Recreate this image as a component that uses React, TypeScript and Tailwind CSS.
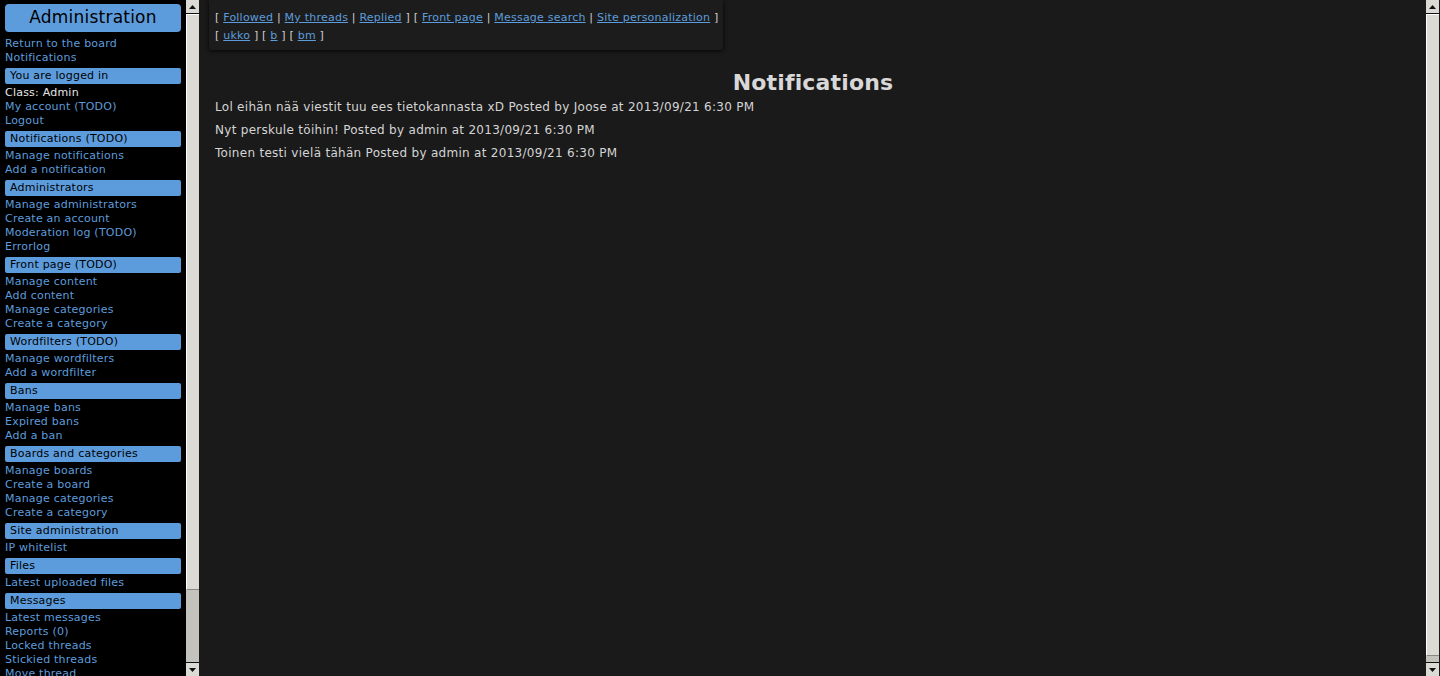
const sections: { title?: string; items: (string | { text: string; plain: true })[] }[] = [
  { items: ['Return to the board', 'Notifications'] },
  { title: 'You are logged in', items: [{ text: 'Class: Admin', plain: true }, 'My account (TODO)', 'Logout'] },
  { title: 'Notifications (TODO)', items: ['Manage notifications', 'Add a notification'] },
  { title: 'Administrators', items: ['Manage administrators', 'Create an account', 'Moderation log (TODO)', 'Errorlog'] },
  { title: 'Front page (TODO)', items: ['Manage content', 'Add content', 'Manage categories', 'Create a category'] },
  { title: 'Wordfilters (TODO)', items: ['Manage wordfilters', 'Add a wordfilter'] },
  { title: 'Bans', items: ['Manage bans', 'Expired bans', 'Add a ban'] },
  { title: 'Boards and categories', items: ['Manage boards', 'Create a board', 'Manage categories', 'Create a category'] },
  { title: 'Site administration', items: ['IP whitelist'] },
  { title: 'Files', items: ['Latest uploaded files'] },
  { title: 'Messages', items: ['Latest messages', 'Reports (0)', 'Locked threads', 'Stickied threads', 'Move thread'] },
]

const notifications = [
  'Lol eihän nää viestit tuu ees tietokannasta xD Posted by Joose at 2013/09/21 6:30 PM',
  'Nyt perskule töihin! Posted by admin at 2013/09/21 6:30 PM',
  'Toinen testi vielä tähän Posted by admin at 2013/09/21 6:30 PM',
]

function Arrow({ down }: { down?: boolean }) {
  return (
    <svg width="7" height="4" viewBox="0 0 7 4">
      {down ? <path d="M0 0h7L3.5 4z" fill="#111" /> : <path d="M0 4h7L3.5 0z" fill="#111" />}
    </svg>
  )
}

function Scrollbar({ track }: { track: string }) {
  return (
    <div className="w-[14px] h-full flex flex-col bg-[#c4c2bd] border-r border-[#1a1a1a] shrink-0">
      <div className="h-[14px] flex items-center justify-center bg-[#dcdad5] border-b border-[#111]">
        <Arrow />
      </div>
      <div className="flex-1 flex flex-col">
        <div className="flex-1 bg-[#dcdad5] border-t border-l border-white border-b border-b-[#8a8884]" />
        <div className={track} />
      </div>
      <div className="h-[14px] flex items-center justify-center bg-[#dcdad5] border-t border-[#111]">
        <Arrow down />
      </div>
    </div>
  )
}

function NavLink({ children }: { children: string }) {
  return <a className="text-[#5d9cdc] underline cursor-pointer">{children}</a>
}

export default function App() {
  return (
    <div className="flex h-[676px] w-[1440px] overflow-hidden font-['DejaVu_Sans',sans-serif] tracking-[0.22px]">
      <div className="flex w-[200px] h-full bg-black shrink-0">
        <div className="w-[186px] h-full overflow-hidden px-[5px] pt-[4px]">
          <div className="h-[28px] rounded-[4px] bg-[#5d9cdc] flex items-center justify-center text-[17px] text-black mb-[4px]">
            Administration
          </div>
          {sections.map((s, i) => (
            <div key={i}>
              {s.title && (
                <div className="mt-[4px] mb-[1px] h-[16px] rounded-[2px] bg-[#5d9cdc] pl-[5px] text-[11px] leading-[16px] text-black">
                  {s.title}
                </div>
              )}
              {s.items.map((it, j) =>
                typeof it === 'string' ? (
                  <div key={j} className="h-[14px] text-[11px] leading-[16px] text-[#5d9cdc] whitespace-nowrap cursor-pointer">
                    {it}
                  </div>
                ) : (
                  <div key={j} className="h-[14px] text-[11px] leading-[16px] text-[#e6e6e6] whitespace-nowrap">
                    {it.text}
                  </div>
                ),
              )}
            </div>
          ))}
        </div>
        <Scrollbar track="h-[72px]" />
      </div>

      <div className="flex-1 h-full bg-[#1a1a1a] flex">
        <div className="flex-1 h-full">
          <div className="ml-[9px] inline-block bg-[#1c1c1c] rounded-b-[3px] shadow-[0_1px_4px_rgba(0,0,0,0.9)] pl-[6px] pr-[5px] pt-[9px] pb-[5px] text-[11px] leading-[18px] text-[#cfcfcf]">
            <div>
              [ <NavLink>Followed</NavLink> | <NavLink>My threads</NavLink> | <NavLink>Replied</NavLink> ] [{' '}
              <NavLink>Front page</NavLink> | <NavLink>Message search</NavLink> | <NavLink>Site personalization</NavLink> ]
            </div>
            <div>
              [ <NavLink>ukko</NavLink> ] [ <NavLink>b</NavLink> ] [ <NavLink>bm</NavLink> ]
            </div>
          </div>
          <h1 className="mt-[20px] text-center text-[22px] leading-[25px] font-bold text-[#d8d8d8] tracking-[0.15px]">
            Notifications
          </h1>
          <div className="pl-[15px] pt-[1px]">
            {notifications.map((n, i) => (
              <div key={i} className="text-[12px] leading-[23px] text-[#d4d4d4] tracking-[0.29px]">
                {n}
              </div>
            ))}
          </div>
        </div>
        <Scrollbar track="h-[6px]" />
      </div>
    </div>
  )
}
